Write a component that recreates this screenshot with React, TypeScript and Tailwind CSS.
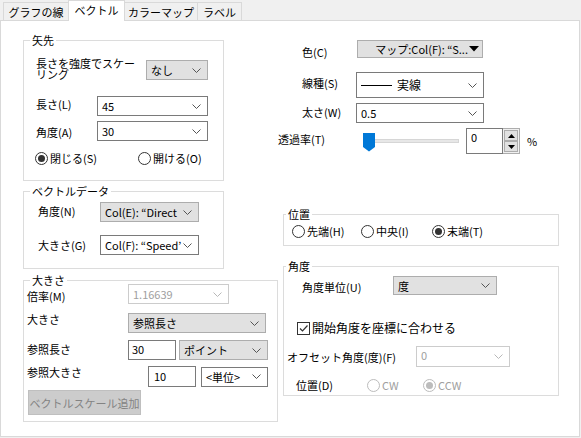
import React from "react";

const Chevron = ({ color = "#555" }: { color?: string }) => (
  <svg width="9" height="5" viewBox="0 0 9 5" className="shrink-0">
    <path d="M0.5 0.5 L4.5 4.5 L8.5 0.5" fill="none" stroke={color} strokeWidth="1" />
  </svg>
);

const variants: Record<string, string> = {
  gray: "bg-[#e1e1e1] border-[#adadad] text-black",
  white: "bg-white border-[#7a7a7a] text-black",
  disabled: "bg-white border-[#cccccc] text-[#a0a0a0]",
};

function Combo({
  className,
  variant = "white",
  top,
  children,
}: {
  className: string;
  variant?: "gray" | "white" | "disabled";
  top?: boolean;
  children: React.ReactNode;
}) {
  return (
    <div
      className={`${className} ${variants[variant]} border flex items-center justify-between pl-[4px] pr-[6px] shrink-0 overflow-hidden`}
    >
      <div className={`whitespace-nowrap leading-[16px] ${top ? "self-start" : ""}`}>{children}</div>
      <Chevron color={variant === "disabled" ? "#b8b8b8" : "#555"} />
    </div>
  );
}

function Radio({ checked, disabled }: { checked?: boolean; disabled?: boolean }) {
  return (
    <span
      className={`w-[13px] h-[13px] rounded-full border flex items-center justify-center shrink-0 bg-white ${
        disabled ? "border-[#bcbcbc]" : "border-[#333333]"
      }`}
    >
      {checked && (
        <span
          className={`w-[7px] h-[7px] rounded-full ${disabled ? "bg-[#bcbcbc]" : "bg-[#333333]"}`}
        />
      )}
    </span>
  );
}

function Group({
  title,
  className,
  titleClass,
  children,
}: {
  title: string;
  className: string;
  titleClass: string;
  children?: React.ReactNode;
}) {
  return (
    <div className={`relative border border-[#dcdcdc] shrink-0 ${className}`}>
      <span className={`absolute top-[-8px] bg-white px-[2px] leading-[14px] ${titleClass}`}>{title}</span>
      {children}
    </div>
  );
}

function Tab({ label, active, className }: { label: string; active?: boolean; className: string }) {
  return (
    <div
      className={`${className} flex items-center justify-center border border-b-0 border-[#d9d9d9] ${
        active ? "h-[21px] mb-[-1px] bg-white relative z-10 pb-[2px]" : "h-[18px] bg-[#f0f0f0] -ml-[1px]"
      }`}
    >
      <span className="leading-[14px] whitespace-nowrap">{label}</span>
    </div>
  );
}

export default function App() {
  return (
    <div className="w-[581px] h-[438px] bg-[#f0f0f0] text-[11px] text-black font-['Noto_Sans_CJK_JP',sans-serif] overflow-hidden">
      {/* tabs */}
      <div className="flex items-end h-[20px] pl-[2px]">
        <Tab label="グラフの線" className="w-[66px] ml-[1px]" />
        <Tab label="ベクトル" active className="w-[57px] -ml-[1px]" />
        <Tab label="カラーマップ" className="w-[74px]" />
        <Tab label="ラベル" className="w-[45px]" />
      </div>

      {/* panel */}
      <div className="w-[580px] h-[417px] border border-[#d9d9d9] bg-white flex">
        {/* left column */}
        <div className="w-[277px] shrink-0 pl-[22px] pt-[19px] flex flex-col">
          <Group title="矢先" className="w-[201px] h-[141px] pl-[12px] pt-[19px]" titleClass="left-[6px]">
            <div className="flex items-center h-[20px]">
              <div className="w-[110px] shrink-0 -mt-[3px]">
                <p className="w-[100px] leading-[11px]">長さを強度でスケーリング</p>
              </div>
              <Combo className="w-[62px] h-[20px]" variant="gray">
                なし
              </Combo>
            </div>
            <div className="flex items-center h-[20px] mt-[16px]">
              <div className="w-[61px] leading-[14px] -mt-[4px]">長さ(L)</div>
              <Combo className="w-[111px] h-[20px]">45</Combo>
            </div>
            <div className="flex items-center h-[20px] mt-[5px]">
              <div className="w-[61px] leading-[14px] mt-[2px]">角度(A)</div>
              <Combo className="w-[111px] h-[20px]">30</Combo>
            </div>
            <div className="flex items-center h-[16px] mt-[9px] -ml-[1px]">
              <div className="w-[103px] flex items-center gap-[2px]">
                <Radio checked />
                <span className="leading-[14px]">閉じる(S)</span>
              </div>
              <div className="flex items-center gap-[2px]">
                <Radio />
                <span className="leading-[14px]">開ける(O)</span>
              </div>
            </div>
          </Group>

          <Group
            title="ベクトルデータ"
            className="w-[201px] h-[78px] mt-[10px] pl-[14px] pt-[10px]"
            titleClass="left-[6px]"
          >
            <div className="flex items-center h-[20px]">
              <div className="w-[62px] leading-[14px] -mt-[2px]">角度(N)</div>
              <Combo className="w-[99px] h-[20px]" variant="gray">
                Col(E): “Direct
              </Combo>
            </div>
            <div className="flex items-center h-[20px] mt-[13px]">
              <div className="w-[62px] leading-[14px]">大きさ(G)</div>
              <Combo className="w-[99px] h-[20px]">Col(F): “Speed’</Combo>
            </div>
          </Group>

          <Group title="大きさ" className="w-[255px] h-[142px] mt-[11px] pl-[3px] pt-[3px]" titleClass="left-[6px]">
            <div className="flex items-center h-[20px]">
              <div className="w-[101px] leading-[14px] mt-[4px]">倍率(M)</div>
              <Combo className="w-[101px] h-[20px]" variant="disabled">
                1.16639
              </Combo>
            </div>
            <div className="flex items-center h-[20px] mt-[9px]">
              <div className="w-[101px] leading-[14px] -mt-[9px]">大きさ</div>
              <Combo className="w-[138px] h-[20px]" variant="gray">
                参照長さ
              </Combo>
            </div>
            <div className="flex items-center h-[20px] mt-[7px]">
              <div className="w-[101px] leading-[14px] -mt-[2px]">参照長さ</div>
              <div className="w-[48px] h-[20px] border border-[#7a7a7a] pl-[3px] leading-[16px] shrink-0">30</div>
              <Combo className="w-[89px] h-[20px] ml-[3px]" variant="gray">
                ポイント
              </Combo>
            </div>
            <div className="flex items-center h-[21px] mt-[6px]">
              <div className="w-[121px] leading-[14px] -mt-[9px]">参照大きさ</div>
              <div className="w-[48px] h-[21px] border border-[#7a7a7a] pl-[5px] leading-[18px] shrink-0">10</div>
              <Combo className="w-[67px] h-[20px] ml-[5px]">&lt;単位&gt;</Combo>
            </div>
            <div className="mt-[3px] ml-[1px] w-[113px] h-[25px] bg-[#cccccc] border border-[#bfbfbf] text-[#838383] flex items-center justify-center leading-[14px] whitespace-nowrap">
              ベクトルスケール追加
            </div>
          </Group>
        </div>

        {/* right column */}
        <div className="flex-1 pt-[19px] flex flex-col">
          <div className="flex items-center h-[18px] pl-[24px]">
            <div className="w-[55px] leading-[14px] mt-[5px]">色(C)</div>
            <div className="w-[126px] h-[18px] bg-[#e1e1e1] border border-[#adadad] flex items-center justify-end pr-[3px] gap-[1px]">
              <span className="leading-[14px] whitespace-nowrap">マップ:Col(F): “S...</span>
              <svg width="10" height="6" viewBox="0 0 10 6">
                <path d="M0 0 H10 L5 5.5 Z" fill="#000" />
              </svg>
            </div>
          </div>
          <div className="flex items-center h-[26px] pl-[24px] mt-[14px]">
            <div className="w-[54px] leading-[14px] -mt-[4px]">線種(S)</div>
            <Combo className="w-[128px] h-[26px]">
              <span className="flex items-center gap-[5px]">
                <span className="inline-block w-[31px] h-[1px] bg-black" />
                <span className="text-[12px] leading-[16px]">実線</span>
              </span>
            </Combo>
          </div>
          <div className="flex items-center h-[20px] pl-[24px] mt-[5px]">
            <div className="w-[54px] leading-[14px] -mt-[2px]">太さ(W)</div>
            <Combo className="w-[128px] h-[20px]">0.5</Combo>
          </div>
          <div className="flex items-center h-[26px] mt-[5px]">
            <div className="w-[85px] leading-[14px] -mt-[5px]">透過率(T)</div>
            <div className="relative w-[96px] h-[26px] shrink-0">
              <div className="absolute left-0 top-[11px] w-[96px] h-[4px] bg-[#e7e7e7] border border-[#d6d6d6]" />
              <svg className="absolute left-0 top-[5px]" width="12" height="19" viewBox="0 0 12 19">
                <path d="M0 0 H12 V14 L6 18.5 L0 14 Z" fill="#0078d7" />
              </svg>
            </div>
            <div className="ml-[7px] flex shrink-0">
              <div className="w-[37px] h-[26px] border border-[#7a7a7a] pl-[4px] leading-[16px]">0</div>
              <div className="w-[17px] h-[26px] border border-l-0 border-[#adadad] bg-[#f0f0f0] flex flex-col justify-between p-[1px]">
                <div className="h-[11px] bg-[#e1e1e1] border border-[#adadad] flex items-center justify-center">
                  <svg width="7" height="4" viewBox="0 0 7 4">
                    <path d="M0 4 H7 L3.5 0 Z" fill="#000" />
                  </svg>
                </div>
                <div className="h-[11px] bg-[#e1e1e1] border border-[#adadad] flex items-center justify-center">
                  <svg width="7" height="4" viewBox="0 0 7 4">
                    <path d="M0 0 H7 L3.5 4 Z" fill="#000" />
                  </svg>
                </div>
              </div>
            </div>
            <span className="ml-[7px] leading-[14px]">%</span>
          </div>

          <Group title="位置" className="ml-[5px] mt-[60px] w-[276px] h-[32px] pl-[8px] pt-[6px]" titleClass="left-[2px]">
            <div className="flex items-center h-[20px]">
              <div className="w-[69px] flex items-center gap-[2px]">
                <Radio />
                <span className="leading-[14px]">先端(H)</span>
              </div>
              <div className="w-[71px] flex items-center gap-[2px]">
                <Radio />
                <span className="leading-[14px]">中央(I)</span>
              </div>
              <div className="flex items-center gap-[2px]">
                <Radio checked />
                <span className="leading-[14px]">末端(T)</span>
              </div>
            </div>
          </Group>

          <Group title="角度" className="ml-[5px] mt-[20px] w-[276px] h-[130px] pt-[9px]" titleClass="left-[2px]">
            <div className="flex items-center h-[19px] pl-[18px]">
              <div className="w-[91px] leading-[14px] mt-[2px]">角度単位(U)</div>
              <Combo className="w-[104px] h-[19px]" variant="gray">
                度
              </Combo>
            </div>
            <div className="flex items-center h-[14px] pl-[13px] mt-[26px] gap-[2px]">
              <span className="w-[13px] h-[13px] border border-[#333333] flex items-center justify-center shrink-0">
                <svg width="11" height="11" viewBox="0 0 11 11">
                  <path d="M2 5.5 L4.5 8 L9.5 2.5" fill="none" stroke="#333" strokeWidth="1.2" />
                </svg>
              </span>
              <span className="leading-[14px] text-[12px]">開始角度を座標に合わせる</span>
            </div>
            <div className="flex items-center h-[21px] pl-[3px] mt-[11px]">
              <div className="w-[129px] leading-[14px] mt-[1px]">オフセット角度(度)(F)</div>
              <Combo className="w-[94px] h-[21px]" variant="disabled" top>
                0
              </Combo>
            </div>
            <div className="flex items-center h-[14px] pl-[12px] mt-[11px]">
              <div className="w-[71px] leading-[14px]">位置(D)</div>
              <div className="w-[56px] flex items-center gap-[2px] text-[#a0a0a0]">
                <Radio disabled />
                <span className="leading-[14px]">CW</span>
              </div>
              <div className="flex items-center gap-[2px] text-[#a0a0a0]">
                <Radio checked disabled />
                <span className="leading-[14px]">CCW</span>
              </div>
            </div>
          </Group>
        </div>
      </div>
    </div>
  );
}
